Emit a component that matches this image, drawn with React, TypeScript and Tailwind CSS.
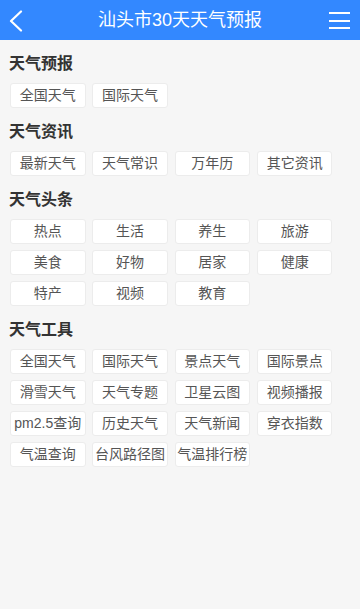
import React from "react";

const sections: { title: string; items: string[] }[] = [
  { title: "天气预报", items: ["全国天气", "国际天气"] },
  { title: "天气资讯", items: ["最新天气", "天气常识", "万年历", "其它资讯"] },
  {
    title: "天气头条",
    items: ["热点", "生活", "养生", "旅游", "美食", "好物", "居家", "健康", "特产", "视频", "教育"],
  },
  {
    title: "天气工具",
    items: [
      "全国天气",
      "国际天气",
      "景点天气",
      "国际景点",
      "滑雪天气",
      "天气专题",
      "卫星云图",
      "视频播报",
      "pm2.5查询",
      "历史天气",
      "天气新闻",
      "穿衣指数",
      "气温查询",
      "台风路径图",
      "气温排行榜",
    ],
  },
];

export default function App() {
  return (
    <div
      className="w-[360px] min-h-[609px] bg-[#f6f6f6]"
      style={{ fontFamily: '"Liberation Sans", "Noto Sans CJK SC", sans-serif' }}
    >
      <header className="relative h-[40px] bg-[#3388ff] flex items-center justify-center">
        <svg
          className="absolute left-[9px] top-[10px]"
          width="14"
          height="22"
          viewBox="0 0 14 22"
          fill="none"
        >
          <path d="M12 1.5 L2 11 L12 20.5" stroke="#fff" strokeWidth="2.2" strokeLinecap="round" strokeLinejoin="round" />
        </svg>
        <h1 className="text-white text-[18px] leading-[40px] font-normal">汕头市30天天气预报</h1>
        <div className="absolute right-[10px] top-[12px] w-[21px] flex flex-col gap-[5.5px]">
          <span className="block h-[2px] bg-white" />
          <span className="block h-[2px] bg-white" />
          <span className="block h-[2px] bg-white" />
        </div>
      </header>
      <main className="pt-[12px] px-[10px] pb-4 flex flex-col gap-[12px]">
        {sections.map((s) => (
          <section key={s.title}>
            <h2 className="text-[16px] leading-[24px] font-bold text-[#333] -ml-px">{s.title}</h2>
            <div className="mt-[7px] grid grid-cols-[repeat(4,75.5px)] gap-x-[6.8px] gap-y-[6px]">
              {s.items.map((it) => (
                <div
                  key={it}
                  className="h-[25px] bg-white border border-[#ececec] rounded-[3px] flex items-center justify-center text-[14px] text-[#555] whitespace-nowrap overflow-visible"
                >
                  {it}
                </div>
              ))}
            </div>
          </section>
        ))}
      </main>
    </div>
  );
}
